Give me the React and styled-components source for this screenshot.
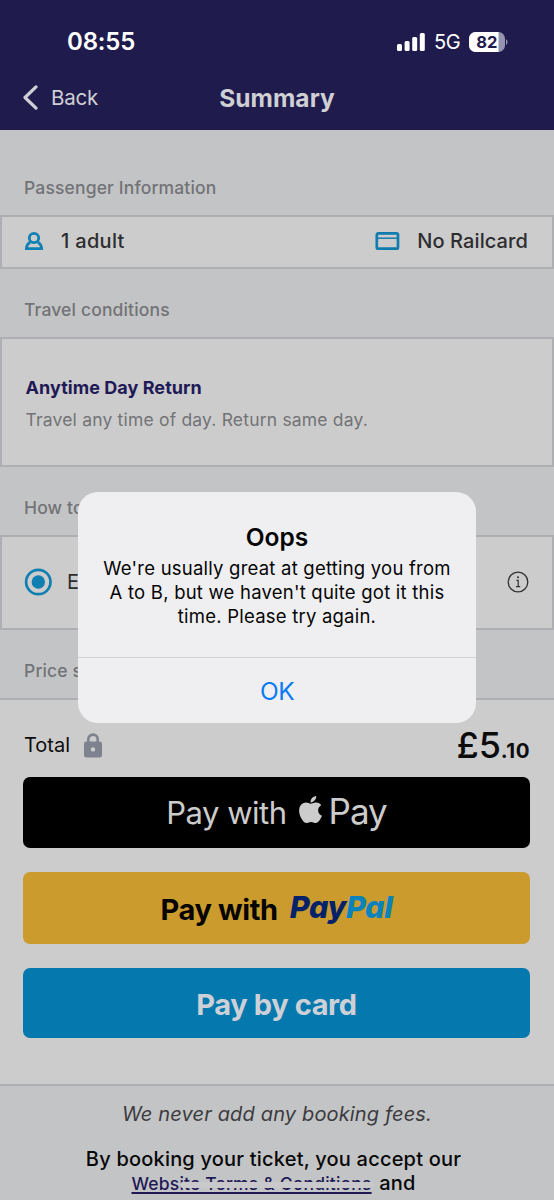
import React from "react";
import styled, { createGlobalStyle, ThemeProvider } from "styled-components";
import { FaApple } from "react-icons/fa";

const theme = {
  colors: {
    navy: "#1f1c4d",
    ink: "#1f1a56",
    page: "#c3c4c6",
    panel: "#cccccc",
    border: "#aeafb2",
    muted: "#727376",
    text: "#2d2d2f",
    brand: "#0579ae",
    gold: "#cb9c2d",
    light: "#cfcfd4",
    link: "#0b7bf3",
  },
};

const GlobalStyle = createGlobalStyle`
  * {
    box-sizing: border-box;
  }

  body {
    margin: 0;
    font-family: Inter, "Liberation Sans", sans-serif;
  }

  h1, h2, h3, p {
    margin: 0;
    font-weight: inherit;
  }

  button {
    font-family: inherit;
    border: none;
    padding: 0;
  }
`;

const Screen = styled.div`
  position: relative;
  width: 554px;
  height: 1200px;
  overflow: hidden;
  background-color: ${({ theme }) => theme.colors.page};
`;

const Header = styled.header`
  height: 130px;
  background-color: ${({ theme }) => theme.colors.navy};
  color: white;
`;

const StatusBar = styled.div`
  display: flex;
  align-items: center;
  justify-content: space-between;
  height: 65px;
  padding: 18px 46px 0 67px;
`;

const Clock = styled.span`
  font-size: 24px;
  font-weight: 600;
  letter-spacing: -0.2px;
`;

const StatusIcons = styled.div`
  display: flex;
  align-items: center;
`;

const Network = styled.span`
  margin: 0 9px 0 9px;
  font-size: 20px;
  letter-spacing: -0.6px;
`;

const NavBar = styled.div`
  display: grid;
  grid-template-columns: 1fr auto 1fr;
  align-items: center;
  height: 65px;
  padding: 0 22px;
  color: ${({ theme }) => theme.colors.light};
`;

const BackLink = styled.div`
  display: flex;
  align-items: center;
  gap: 12px;
  font-size: 20.5px;
  letter-spacing: -0.2px;
`;

const PageTitle = styled.h1`
  font-size: 24.5px;
  font-weight: 700;
  letter-spacing: 0.05px;
`;

const SectionLabel = styled.h2`
  display: flex;
  align-items: center;
  height: ${({ $height }) => $height}px;
  padding: ${({ $top }) => $top || 0}px 24px 0;
  color: ${({ theme }) => theme.colors.muted};
  font-size: 17.5px;
  font-weight: 450;
  letter-spacing: 0.15px;
`;

const Card = styled.section`
  display: flex;
  align-items: center;
  justify-content: space-between;
  height: ${({ $height }) => $height}px;
  padding: 0 ${({ $right }) => $right || 24}px 2px 22px;
  border: 2px solid ${({ theme }) => theme.colors.border};
  background-color: ${({ theme }) => theme.colors.panel};
  color: ${({ theme }) => theme.colors.text};
`;

const IconText = styled.div`
  display: flex;
  align-items: center;
  gap: ${({ $gap }) => $gap}px;
  font-size: 20px;
  font-weight: ${({ $weight }) => $weight || 450};
  letter-spacing: ${({ $spacing }) => $spacing || 0}px;
`;

const Ticket = styled.div`
  padding: 5px 0 0 1.5px;
`;

const TicketType = styled.h3`
  color: ${({ theme }) => theme.colors.ink};
  font-size: 18px;
  font-weight: 700;
  line-height: 32px;
  letter-spacing: 0.05px;
`;

const TicketInfo = styled.p`
  color: ${({ theme }) => theme.colors.muted};
  font-size: 17.5px;
  line-height: 32px;
  letter-spacing: 0.19px;
`;

const CheckoutPanel = styled.section`
  display: flex;
  flex-direction: column;
  height: 388px;
  padding: 0 24px 0 23px;
  border-top: 2px solid ${({ theme }) => theme.colors.border};
  border-bottom: 2px solid ${({ theme }) => theme.colors.border};
  background-color: ${({ theme }) => theme.colors.panel};
`;

const TotalRow = styled.div`
  display: flex;
  align-items: center;
  justify-content: space-between;
  height: 77px;
  padding: 13px 0 0 1px;
  color: #0c0c0d;
`;

const Price = styled.div`
  font-size: 36px;
  font-weight: 500;
  letter-spacing: -0.1px;

  small {
    font-size: 20.5px;
    font-weight: 700;
    letter-spacing: 0.5px;
  }
`;

const PayButton = styled.button`
  display: flex;
  align-items: center;
  justify-content: center;
  height: ${({ $height }) => $height}px;
  margin-bottom: 24px;
  padding-top: ${({ $top }) => $top || 0}px;
  flex-shrink: 0;
  border-radius: 7px;
  background-color: ${({ $background }) => $background};
  color: ${({ $color }) => $color};
  font-size: ${({ $size }) => $size || 29}px;
  font-weight: ${({ $weight }) => $weight || 700};
  letter-spacing: ${({ $spacing }) => $spacing || -0.4}px;
`;

const ApplePay = styled.span`
  display: flex;
  align-items: center;
  margin: -3px 0 0 8px;
  font-size: 35px;
  letter-spacing: -1px;

  svg {
    margin: -4px 3px 0 0;
  }
`;

const PayPal = styled.span`
  margin: -6px 0 0 12px;
  color: #04226a;
  font-size: 30.5px;
  font-style: italic;
  font-weight: 800;
  font-feature-settings: "cv11";
  letter-spacing: -0.4px;

  b {
    color: #0a83bd;
    font-weight: inherit;
  }
`;

const Footer = styled.footer`
  padding-top: 11px;
  text-align: center;
  font-size: 20px;
  color: #080809;
`;

const FeesNote = styled.p`
  height: 50px;
  color: #3b3b3e;
  font-style: italic;
  line-height: 34px;
  letter-spacing: 0.15px;
`;

const Terms = styled.p`
  padding-right: 7px;
  font-weight: 500;
  line-height: 24px;
  letter-spacing: 0.2px;

  u {
    margin-right: 2px;
    color: ${({ theme }) => theme.colors.ink};
    font-size: 17.5px;
    letter-spacing: 0.18px;
    text-decoration-thickness: 1.5px;
    text-underline-offset: 1.5px;
    text-decoration-skip-ink: none;
  }
`;

const HomeIndicator = styled.div`
  position: absolute;
  left: 180px;
  bottom: 12px;
  width: 194px;
  height: 6px;
  border-radius: 3px;
  background-color: #c9c9cb;
`;

const Alert = styled.div`
  position: absolute;
  top: 492px;
  left: 78px;
  width: 398px;
  height: 231px;
  border-radius: 20px;
  background-color: #efeff1;
  color: #050505;
  text-align: center;
`;

const AlertBody = styled.div`
  height: 166px;
  padding-top: 30px;
  border-bottom: 1.5px solid #d3d3d6;
`;

const AlertTitle = styled.h3`
  font-size: 24.5px;
  font-weight: 600;
  line-height: 30px;
`;

const AlertText = styled.p`
  margin-top: 4px;
  font-size: 18.5px;
  line-height: 24px;
  letter-spacing: 0.22px;
`;

const AlertButton = styled.button`
  width: 100%;
  height: 65px;
  background: none;
  color: ${({ theme }) => theme.colors.link};
  font-size: 24.5px;
  letter-spacing: -0.6px;
`;

const SignalIcon = () => (
  <svg width="28" height="20" viewBox="0 0 28 20" fill="white">
    <rect x="0" y="12" width="5" height="7" rx="1.5" />
    <rect x="7.6" y="9" width="5" height="10" rx="1.5" />
    <rect x="15.2" y="5" width="5" height="14" rx="1.5" />
    <rect x="22.8" y="1" width="5" height="18" rx="1.5" />
  </svg>
);

const BatteryIcon = ({ level }) => (
  <svg width="39" height="20" viewBox="0 0 39 20">
    <defs>
      <clipPath id="battery">
        <rect width="36" height="20" rx="6.5" />
      </clipPath>
    </defs>
    <g clipPath="url(#battery)">
      <rect width="36" height="20" fill="#9493b0" />
      <rect width="29.5" height="20" fill="white" />
    </g>
    <path d="M37 7.2c2 .8 2 4.8 0 5.6z" fill="#9493b0" />
    <text x="17.8" y="15.8" textAnchor="middle" fontSize="16.5" fontWeight="700" fill="#1f1c4d">
      {level}
    </text>
  </svg>
);

const ChevronIcon = () => (
  <svg width="17" height="26" viewBox="0 0 17 26" fill="none" stroke="#cfcfd4" strokeWidth="3.2">
    <path d="M14 1.9L3 12.5l11 10.6" strokeLinecap="round" strokeLinejoin="round" />
  </svg>
);

const PersonIcon = () => (
  <svg width="20" height="20" viewBox="0 0 20 20" fill="none" stroke="#0f80b3" strokeWidth="2.8">
    <circle cx="10" cy="7" r="4.7" />
    <path d="M6 11.2C3.8 12.6 2.5 14.8 2.4 17.6h15.2c-.1-2.8-1.4-5-3.6-6.4" />
  </svg>
);

const RailcardIcon = () => (
  <svg width="25" height="20" viewBox="0 0 25 20" fill="none" stroke="#0f7cad">
    <rect x="1.8" y="2.3" width="21.2" height="15.4" rx="1.5" strokeWidth="2.7" />
    <path d="M2 7.2h21" strokeWidth="1.5" />
  </svg>
);

const RadioIcon = () => (
  <svg width="28" height="28" viewBox="0 0 28 28">
    <circle cx="14.3" cy="14" r="12.2" fill="none" stroke="#0f7fb1" strokeWidth="2.7" />
    <circle cx="14.3" cy="14" r="6.7" fill="#0f7fb1" />
  </svg>
);

const InfoIcon = () => (
  <svg width="22" height="22" viewBox="0 0 22 22" fill="none" stroke="#303032">
    <circle cx="11" cy="11" r="9.8" strokeWidth="1.3" />
    <path d="M9.4 9.3h1.8v6.2M9 15.6h4.2" strokeWidth="1.2" />
    <circle cx="11" cy="6.3" r="1" fill="#303032" stroke="none" />
  </svg>
);

const LockIcon = () => (
  <svg width="18" height="25" viewBox="0 0 18 25">
    <path d="M4.3 10V6.3a4.7 4.7 0 0 1 9.4 0V10" fill="none" stroke="#7d828e" strokeWidth="2.6" />
    <rect x="0" y="8.5" width="18" height="16" rx="2.2" fill="#7d828e" />
    <circle cx="9" cy="16.4" r="2.2" fill="#cccccc" />
  </svg>
);

const App = () => (
  <ThemeProvider theme={theme}>
    <GlobalStyle />
    <Screen>
      <Header>
        <StatusBar>
          <Clock>08:55</Clock>
          <StatusIcons>
            <SignalIcon />
            <Network>5G</Network>
            <BatteryIcon level={82} />
          </StatusIcons>
        </StatusBar>
        <NavBar>
          <BackLink>
            <ChevronIcon />
            Back
          </BackLink>
          <PageTitle>Summary</PageTitle>
        </NavBar>
      </Header>

      <SectionLabel $height={85} $top={29}>Passenger Information</SectionLabel>
      <Card $height={54}>
        <IconText $gap={17} $spacing={0.3}>
          <PersonIcon />
          1 adult
        </IconText>
        <IconText $gap={17} $spacing={0.1}>
          <RailcardIcon />
          No Railcard
        </IconText>
      </Card>

      <SectionLabel $height={68} $top={12}>Travel conditions</SectionLabel>
      <Card $height={130}>
        <Ticket>
          <TicketType>Anytime Day Return</TicketType>
          <TicketInfo>Travel any time of day. Return same day.</TicketInfo>
        </Ticket>
      </Card>

      <SectionLabel $height={68} $top={12}>How to</SectionLabel>
      <Card $height={95} $right={23}>
        <IconText $gap={15} $weight={400}>
          <RadioIcon />
          E
        </IconText>
        <InfoIcon />
      </Card>

      <SectionLabel $height={68} $top={12}>Price s</SectionLabel>
      <CheckoutPanel>
        <TotalRow>
          <IconText $gap={14} $weight={400}>
            Total
            <LockIcon />
          </IconText>
          <Price>
            £5<small>.10</small>
          </Price>
        </TotalRow>
        <PayButton
          $height={71}
          $background="#000000"
          $color="#cccccc"
          $size={31}
          $weight={400}
          $spacing={-0.5}
        >
          Pay with
          <ApplePay>
            <FaApple size={31} />
            Pay
          </ApplePay>
        </PayButton>
        <PayButton $height={72} $top={3} $background={theme.colors.gold} $color="#060503">
          Pay with
          <PayPal>
            Pay<b>Pal</b>
          </PayPal>
        </PayButton>
        <PayButton $height={70} $top={3} $background={theme.colors.brand} $color="#cdd0d6">
          Pay by card
        </PayButton>
      </CheckoutPanel>

      <Footer>
        <FeesNote>We never add any booking fees.</FeesNote>
        <Terms>
          By booking your ticket, you accept our
          <br />
          <u>Website Terms &amp; Conditions</u> and
        </Terms>
      </Footer>

      <HomeIndicator />

      <Alert role="alertdialog">
        <AlertBody>
          <AlertTitle>Oops</AlertTitle>
          <AlertText>
            We're usually great at getting you from
            <br />
            A to B, but we haven't quite got it this
            <br />
            time. Please try again.
          </AlertText>
        </AlertBody>
        <AlertButton>OK</AlertButton>
      </Alert>
    </Screen>
  </ThemeProvider>
);

export default App;
